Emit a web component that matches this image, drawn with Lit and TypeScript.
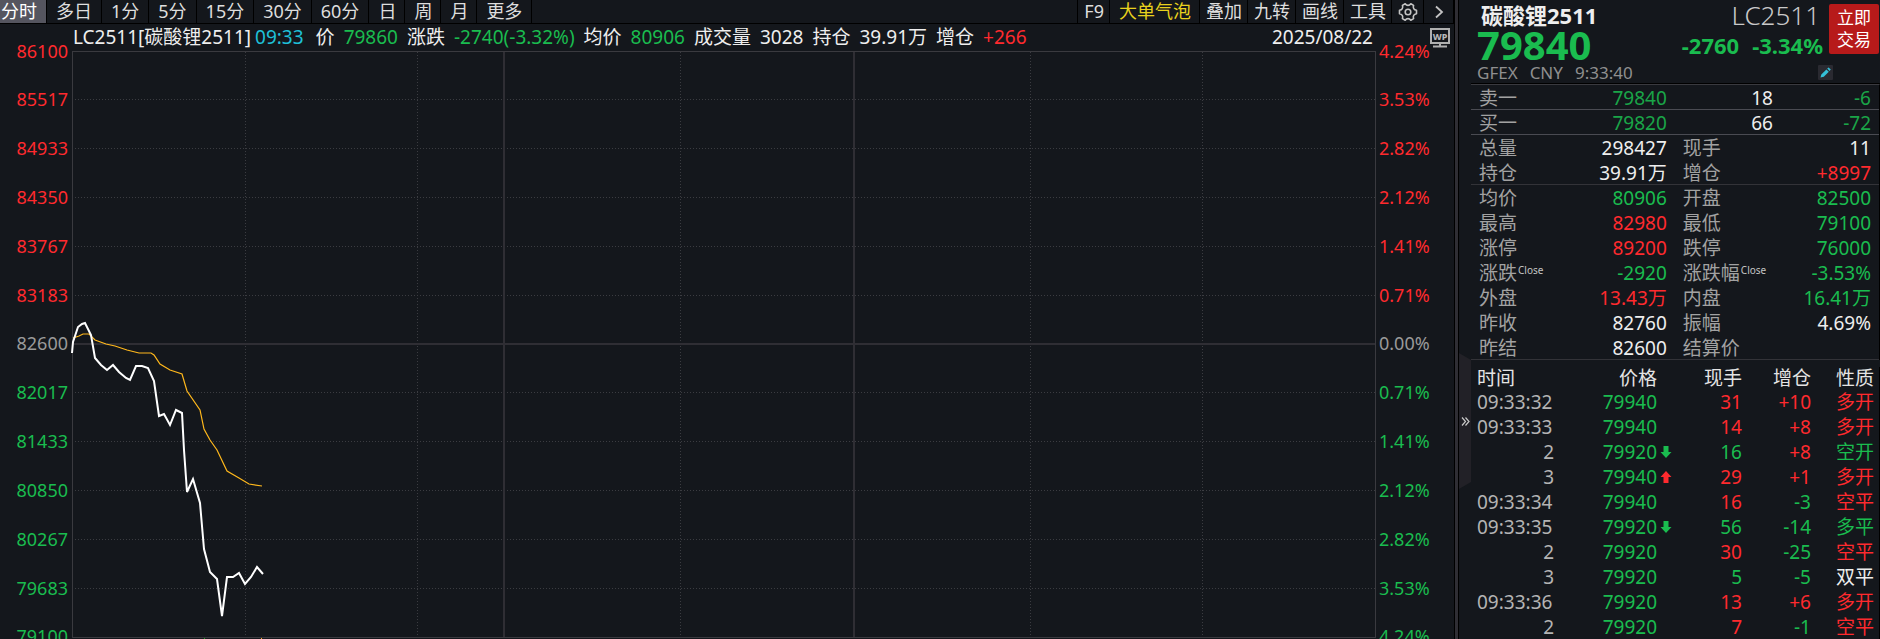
import { LitElement, html, svg, css, nothing } from "lit";
import { customElement, state } from "lit/decorators.js";
import { classMap } from "lit/directives/class-map.js";

type Tone = "up" | "down" | "flat" | "plain";
type Point = [number, number];

const PERIODS = ["分时", "多日", "1分", "5分", "15分", "30分", "60分", "日", "周", "月", "更多"];

const PRICE_AXIS = ["86100", "85517", "84933", "84350", "83767", "83183", "82600", "82017", "81433", "80850", "80267", "79683", "79100"];
const PERCENT_AXIS = ["4.24%", "3.53%", "2.82%", "2.12%", "1.41%", "0.71%", "0.00%", "0.71%", "1.41%", "2.12%", "2.82%", "3.53%", "4.24%"];
const MIDDLE = 6;

const axisTone = (i: number): Tone => (i < MIDDLE ? "up" : i > MIDDLE ? "down" : "flat");

const PLOT_W = 1304;
const PLOT_H = 587;
const SESSION_DOTS = [173, 345, 608, 958, 1130];
const SESSION_BREAKS = [432, 782];

const PRICE_LINE: Point[] = [
  [0, 302], [1, 291], [6, 276], [10, 273], [13, 272], [19, 284], [23, 307], [29, 314], [35, 319], [41, 314],
  [47, 321], [54, 327], [58, 329], [64, 315], [70, 315], [76, 317], [82, 330], [87, 365], [92, 363], [98, 374],
  [104, 359], [110, 362], [112, 399], [115, 441], [121, 428], [128, 452], [132, 498], [138, 521], [145, 528],
  [150, 565], [155, 526], [161, 526], [167, 522], [173, 533], [179, 526], [185, 516], [191, 523],
];
const AVERAGE_LINE: Point[] = [
  [1, 287], [7, 285], [11, 283], [17, 283], [23, 289], [34, 293], [43, 295], [55, 299], [67, 302], [79, 302],
  [82, 304], [88, 313], [98, 319], [110, 323], [115, 340], [128, 359], [132, 378], [138, 389], [145, 399],
  [155, 420], [167, 427], [177, 433], [190, 435],
];
const toPoints = (line: Point[]) => line.map(([x, y]) => `${x},${y}`).join(" ");

const SUMMARY: { label: string; value: string; tone: Tone }[] = [
  { label: "价", value: "79860", tone: "down" },
  { label: "涨跌", value: "-2740(-3.32%)", tone: "down" },
  { label: "均价", value: "80906", tone: "down" },
  { label: "成交量", value: "3028", tone: "plain" },
  { label: "持仓", value: "39.91万", tone: "plain" },
  { label: "增仓", value: "+266", tone: "up" },
];

const BOOK = [
  { side: "卖一", price: "79840", volume: "18", change: "-6" },
  { side: "买一", price: "79820", volume: "66", change: "-72" },
];

interface Stat {
  label: string;
  note?: string;
  value: string;
  tone: Tone;
}
const STATS: [Stat, Stat][] = [
  [{ label: "总量", value: "298427", tone: "plain" }, { label: "现手", value: "11", tone: "plain" }],
  [{ label: "持仓", value: "39.91万", tone: "plain" }, { label: "增仓", value: "+8997", tone: "up" }],
  [{ label: "均价", value: "80906", tone: "down" }, { label: "开盘", value: "82500", tone: "down" }],
  [{ label: "最高", value: "82980", tone: "up" }, { label: "最低", value: "79100", tone: "down" }],
  [{ label: "涨停", value: "89200", tone: "up" }, { label: "跌停", value: "76000", tone: "down" }],
  [{ label: "涨跌", note: "Close", value: "-2920", tone: "down" }, { label: "涨跌幅", note: "Close", value: "-3.53%", tone: "down" }],
  [{ label: "外盘", value: "13.43万", tone: "up" }, { label: "内盘", value: "16.41万", tone: "down" }],
  [{ label: "昨收", value: "82760", tone: "plain" }, { label: "振幅", value: "4.69%", tone: "plain" }],
  [{ label: "昨结", value: "82600", tone: "plain" }, { label: "结算价", value: "", tone: "plain" }],
];
const STAT_BREAKS = [1, 8];

interface Trade {
  time: string;
  price: string;
  move?: "up" | "down";
  volume: string;
  volumeTone: Tone;
  change: string;
  kind: string;
  kindTone: Tone;
}
const TRADES: Trade[] = [
  { time: "09:33:32", price: "79940", volume: "31", volumeTone: "up", change: "+10", kind: "多开", kindTone: "up" },
  { time: "09:33:33", price: "79940", volume: "14", volumeTone: "up", change: "+8", kind: "多开", kindTone: "up" },
  { time: "2", price: "79920", move: "down", volume: "16", volumeTone: "down", change: "+8", kind: "空开", kindTone: "down" },
  { time: "3", price: "79940", move: "up", volume: "29", volumeTone: "up", change: "+1", kind: "多开", kindTone: "up" },
  { time: "09:33:34", price: "79940", volume: "16", volumeTone: "up", change: "-3", kind: "空平", kindTone: "up" },
  { time: "09:33:35", price: "79920", move: "down", volume: "56", volumeTone: "down", change: "-14", kind: "多平", kindTone: "down" },
  { time: "2", price: "79920", volume: "30", volumeTone: "up", change: "-25", kind: "空平", kindTone: "up" },
  { time: "3", price: "79920", volume: "5", volumeTone: "down", change: "-5", kind: "双平", kindTone: "plain" },
  { time: "09:33:36", price: "79920", volume: "13", volumeTone: "up", change: "+6", kind: "多开", kindTone: "up" },
  { time: "2", price: "79920", volume: "7", volumeTone: "up", change: "-1", kind: "空平", kindTone: "up" },
];

const shared = css`
  * {
    box-sizing: border-box;
  }
  button {
    font: inherit;
    color: inherit;
    background: none;
    border: 0;
    padding: 0;
    cursor: pointer;
    white-space: nowrap;
  }
  .up {
    color: #ff2a2e;
  }
  .down {
    color: #1abc4f;
  }
  .flat {
    color: #9a9a9a;
  }
  .plain {
    color: #eeeeee;
  }
`;

@customElement("period-bar")
class PeriodBar extends LitElement {
  @state() private active = "分时";

  static styles = [
    shared,
    css`
      :host {
        display: flex;
        height: 24px;
        border-bottom: 1px solid #000;
        font-size: 18px;
        line-height: 20px;
        color: #dedede;
      }
      nav,
      .tools {
        display: flex;
      }
      .tools {
        margin-left: auto;
        border-left: 1px solid #000;
      }
      button {
        display: flex;
        align-items: center;
        justify-content: center;
        padding: 0 9px 2px;
        border-right: 1px solid #000;
      }
      nav button:first-child {
        padding-left: 1px;
      }
      nav .short {
        padding-right: 8px;
      }
      .active {
        background: #55555f;
        color: #fff;
      }
      .tools button {
        padding: 0 5px 2px 6px;
      }
      .tools .bubble {
        padding: 0 8px 2px 9px;
        color: #e8d21d;
      }
      .tools .icon {
        width: 32px;
        padding: 0;
      }
      .tools .next {
        width: 30px;
      }
      svg {
        display: block;
        fill: none;
        stroke: #c4c4c4;
      }
    `,
  ];

  render() {
    return html`
      <nav>
        ${PERIODS.map(
          (p) => html`<button
            class=${classMap({ active: p === this.active, short: p.length === 1 })}
            @click=${() => (this.active = p)}
          >
            ${p}
          </button>`
        )}
      </nav>
      <div class="tools">
        <button>F9</button>
        <button class="bubble">大单气泡</button>
        <button>叠加</button>
        <button>九转</button>
        <button>画线</button>
        <button>工具</button>
        <button class="icon" aria-label="设置">
          <svg width="20" height="20" viewBox="0 0 20 20" stroke-width="1.6" stroke-linejoin="round">
            <path
              d="M7.2 1.8 Q8.3 3.4 10 3.4 Q11.7 3.4 12.8 1.8 L15.6 3.4 Q14.9 5.2 15.7 6.6 Q16.5 8 18.5 8.3 V11.7 Q16.5 12 15.7 13.4 Q14.9 14.8 15.6 16.6 L12.8 18.2 Q11.7 16.6 10 16.6 Q8.3 16.6 7.2 18.2 L4.4 16.6 Q5.1 14.8 4.3 13.4 Q3.5 12 1.5 11.7 V8.3 Q3.5 8 4.3 6.6 Q5.1 5.2 4.4 3.4 Z"
            />
            <circle cx="10" cy="10" r="2.8" />
          </svg>
        </button>
        <button class="icon next" aria-label="展开">
          <svg width="10" height="14" viewBox="0 0 10 14" stroke-width="1.8"><path d="M2 1.5 L8 7 L2 12.5" /></svg>
        </button>
      </div>
    `;
  }
}

@customElement("intraday-chart")
class IntradayChart extends LitElement {
  static styles = [
    shared,
    css`
      :host {
        display: flex;
        flex-direction: column;
        min-height: 0;
        overflow: hidden;
      }
      .info {
        display: flex;
        align-items: center;
        height: 27px;
        flex: none;
        padding: 0 3px 0 73px;
        font-size: 19px;
        line-height: 27px;
        color: #eee;
        white-space: nowrap;
      }
      .clock {
        color: #1fc0d8;
        margin: 0 12px 0 4px;
      }
      .items {
        display: flex;
        gap: 9px;
      }
      .date {
        margin-left: auto;
        margin-right: 57px;
      }
      .board {
        flex: none;
        margin-right: 1px;
      }
      .body {
        flex: 1;
        min-height: 0;
        display: grid;
        grid-template-columns: 72px minmax(0, 1fr) 78px;
        padding-bottom: 1px;
      }
      .axis {
        display: flex;
        flex-direction: column;
        justify-content: space-between;
        list-style: none;
        margin: -1px 0 1px;
        padding: 0 4px 0 3px;
        font-size: 18px;
      }
      .axis li {
        display: flex;
        align-items: center;
        height: 1px;
        line-height: 20px;
      }
      .price li {
        justify-content: flex-end;
      }
      .plot {
        display: block;
        width: 100%;
        height: 100%;
        overflow: visible;
      }
      .dots {
        stroke: #3b3c41;
        stroke-dasharray: 1 2;
      }
      .solid {
        stroke: #2f2e34;
        stroke-width: 2;
      }
      .frame {
        fill: none;
        stroke: #3a3a3f;
      }
      .last {
        fill: none;
        stroke: #fff;
        stroke-width: 2;
      }
      .average {
        fill: none;
        stroke: #ffb81c;
        stroke-width: 1.2;
      }
    `,
  ];

  render() {
    return html`
      <div class="info">
        <span>LC2511[碳酸锂2511]</span>
        <span class="clock">09:33</span>
        <div class="items">
          ${SUMMARY.map((s) => html`<span>${s.label}</span><span class=${s.tone}>${s.value}</span>`)}
        </div>
        <span class="date">2025/08/22</span>
        <svg class="board" width="20" height="20" viewBox="0 0 20 20">
          <rect x="1" y="1" width="18" height="14" fill="none" stroke="#b0b0b0" stroke-width="2" />
          <path d="M10 15 V18 M3 18.5 H17" fill="none" stroke="#b0b0b0" stroke-width="2" />
          <text x="10" y="11.5" text-anchor="middle" font-size="9" font-weight="800" fill="#b8b8b8">WP</text>
        </svg>
      </div>
      <div class="body">
        <ul class="axis price">
          ${PRICE_AXIS.map((v, i) => html`<li class=${axisTone(i)}>${v}</li>`)}
        </ul>
        <svg class="plot" viewBox="0 0 ${PLOT_W} ${PLOT_H}" preserveAspectRatio="none">
          ${PRICE_AXIS.map((_, i) => {
            const y = Math.floor((i * (PLOT_H - 1)) / 12) + 0.5;
            return i === 0 || i === 12 || i === MIDDLE
              ? nothing
              : svg`<line class="dots" x1="3" x2=${PLOT_W} y1=${y} y2=${y} />`;
          })}
          ${SESSION_DOTS.map((x) => svg`<line class="dots" x1=${x + 0.5} x2=${x + 0.5} y1="1" y2=${PLOT_H} />`)}
          ${SESSION_BREAKS.map((x) => svg`<line class="solid" x1=${x} x2=${x} y1="1" y2=${PLOT_H} />`)}
          <line class="solid" x1="1" x2=${PLOT_W} y1="293" y2="293" />
          <rect class="frame" x="0.5" y="0.5" width=${PLOT_W - 1} height=${PLOT_H - 1} />
          <polyline class="average" points=${toPoints(AVERAGE_LINE)} />
          <polyline class="last" points=${toPoints(PRICE_LINE)} />
          <rect x="132" y=${PLOT_H} width="1" height="1" fill="#1a9a1a" />
          <rect x="189" y=${PLOT_H} width="1" height="1" fill="#f5a020" />
        </svg>
        <ul class="axis">
          ${PERCENT_AXIS.map((v, i) => html`<li class=${axisTone(i)}>${v}</li>`)}
        </ul>
      </div>
    `;
  }
}

@customElement("quote-panel")
class QuotePanel extends LitElement {
  static styles = [
    shared,
    css`
      :host {
        display: block;
        min-width: 0;
        font-size: 19px;
        color: #eee;
        white-space: nowrap;
      }
      .head {
        display: grid;
        grid-template-columns: minmax(0, 1fr) 50px;
        column-gap: 6px;
        padding: 0 1px 0 6px;
        height: 84px;
        line-height: 1;
      }
      .title,
      .quote {
        display: flex;
        justify-content: space-between;
        align-items: center;
        height: 30px;
      }
      .name {
        padding-left: 4px;
        font-size: 22px;
        font-weight: 700;
      }
      .code {
        padding-right: 3px;
        font-size: 26px;
        font-weight: 300;
        color: #c9c9c9;
      }
      .price {
        font-size: 40px;
        font-weight: 700;
      }
      .delta {
        display: flex;
        gap: 13px;
        font-size: 22px;
        font-weight: 700;
      }
      .meta {
        display: flex;
        gap: 12px;
        align-items: center;
        height: 24px;
        font-size: 17px;
        color: #8f8f8f;
      }
      .edit {
        display: block;
        width: 15px;
        height: 15px;
        margin-left: auto;
        margin-right: -10px;
        background: #2a2a31;
        border-radius: 1px;
      }
      .edit svg {
        display: block;
      }
      .trade {
        margin-top: 4px;
        height: 50px;
        border-radius: 2px;
        background: #b71a1a;
        color: #fff;
        font-size: 17px;
        line-height: 22px;
        white-space: normal;
        padding: 0 8px;
      }
      table {
        width: 100%;
        table-layout: fixed;
        border-collapse: separate;
        border-spacing: 0;
        border-right: 1px solid #000;
      }
      th,
      td {
        height: 25px;
        padding: 2px 0 0;
        font-weight: 400;
        line-height: 22px;
        text-align: right;
        border-bottom: 1px solid transparent;
      }
      .label {
        padding-left: 8px;
        text-align: left;
        color: #a2a2a2;
      }
      .second {
        padding-left: 16px;
      }
      .end {
        padding-right: 8px;
      }
      .ruled > * {
        border-bottom-color: #333338;
      }
      .book {
        border-top: 1px solid #3a3a3f;
        box-shadow: 0 -1px #000;
      }
      .book .ruled > * {
        border-bottom-color: #4a4b52;
      }
      .dim {
        color: #1aa548;
      }
      sup {
        margin-left: 1px;
        font-size: 10px;
        line-height: 10px;
        vertical-align: 6px;
        color: #c4c4c4;
      }
      .ticks {
        margin-top: 7px;
      }
      .ticks thead th {
        height: 22px;
        line-height: 19px;
        color: #e4e4e4;
      }
      .ticks .time {
        padding-left: 6px;
        text-align: left;
      }
      .ticks td.time {
        color: #b4b4b4;
      }
      .ticks .seq {
        padding-left: 0;
        text-align: right;
      }
      .ticks .kind {
        padding-right: 5px;
      }
      .ticks svg {
        display: block;
        margin-left: 3px;
        fill: currentColor;
      }
      .c-side {
        width: 16%;
      }
      .c-price {
        width: 32%;
      }
      .c-size {
        width: 26%;
      }
      .c-half {
        width: 24%;
      }
      .c-label {
        width: 27%;
      }
      .c-time,
      .c-last {
        width: 83px;
      }
      .c-last {
        width: 103px;
      }
      .c-arrow {
        width: 16px;
      }
      .c-lots {
        width: 69px;
      }
    `,
  ];

  private stat(s: Stat, second: boolean) {
    return html`
      <th scope="row" class=${classMap({ label: true, second })}>${s.label}${s.note ? html`<sup>${s.note}</sup>` : nothing}</th>
      <td class=${classMap({ [s.tone]: true, end: second })}>${s.value}</td>
    `;
  }

  private arrow(move?: "up" | "down") {
    if (!move) return nothing;
    return html`<svg class=${move} width="12" height="12" viewBox="0 0 12 12">
      <path d=${move === "up" ? "M6 0 L11.5 6 H8.5 V12 H3.5 V6 H0.5 Z" : "M6 12 L11.5 6 H8.5 V0 H3.5 V6 H0.5 Z"} />
    </svg>`;
  }

  render() {
    return html`
      <header class="head">
        <div>
          <div class="title"><span class="name">碳酸锂2511</span><span class="code">LC2511</span></div>
          <div class="quote down">
            <span class="price">79840</span>
            <span class="delta"><span>-2760</span><span>-3.34%</span></span>
          </div>
          <div class="meta">
            <span>GFEX</span><span>CNY</span><span>9:33:40</span>
            <button class="edit" aria-label="编辑">
              <svg width="15" height="15" viewBox="0 0 15 15" fill="#35c0d8">
                <path d="M2.5 12.5 L3.3 9.4 L8.4 4.4 L10.8 6.8 L5.8 11.8 Z M9.2 3.6 L10.6 2.4 L12.8 4.6 L11.5 6 Z" />
              </svg>
            </button>
          </div>
        </div>
        <button class="trade">立即<br />交易</button>
      </header>

      <table class="book">
        <colgroup>
          <col class="c-side" /><col class="c-price" /><col class="c-size" /><col class="c-size" />
        </colgroup>
        <tbody>
          ${BOOK.map(
            (b) => html`<tr class="ruled">
              <th scope="row" class="label">${b.side}</th>
              <td class="dim">${b.price}</td>
              <td>${b.volume}</td>
              <td class="dim end">${b.change}</td>
            </tr>`
          )}
        </tbody>
      </table>

      <table>
        <colgroup>
          <col class="c-half" /><col class="c-half" /><col class="c-label" /><col />
        </colgroup>
        <tbody>
          ${STATS.map(
            ([a, b], i) => html`<tr class=${classMap({ ruled: STAT_BREAKS.includes(i) })}>
              ${this.stat(a, false)}${this.stat(b, true)}
            </tr>`
          )}
        </tbody>
      </table>

      <table class="ticks">
        <colgroup>
          <col class="c-time" /><col class="c-last" /><col class="c-arrow" /><col class="c-lots" /><col class="c-lots" /><col />
        </colgroup>
        <thead>
          <tr>
            <th class="time">时间</th>
            <th>价格</th>
            <th></th>
            <th>现手</th>
            <th>增仓</th>
            <th class="kind">性质</th>
          </tr>
        </thead>
        <tbody>
          ${TRADES.map(
            (t) => html`<tr>
              <td class=${classMap({ time: true, seq: t.time.length < 3 })}>${t.time}</td>
              <td class="down">${t.price}</td>
              <td>${this.arrow(t.move)}</td>
              <td class=${t.volumeTone}>${t.volume}</td>
              <td class=${t.change.startsWith("+") ? "up" : "down"}>${t.change}</td>
              <td class="kind ${t.kindTone}">${t.kind}</td>
            </tr>`
          )}
        </tbody>
      </table>
    `;
  }
}

@customElement("app-root")
class AppRoot extends LitElement {
  static styles = [
    shared,
    css`
      :host {
        display: grid;
        grid-template-columns: minmax(0, 1fr) 5px 12px 409px;
        height: 100vh;
        overflow: hidden;
        background: #14171c;
        font-family: "Noto Sans", "Noto Sans CJK SC", sans-serif;
      }
      .main {
        display: flex;
        flex-direction: column;
        min-width: 0;
        min-height: 0;
      }
      intraday-chart {
        flex: 1;
      }
      .divider {
        background: #2f2e34;
        border: solid #000;
        border-width: 0 1px;
      }
      .rail {
        padding-top: 353px;
      }
      .fold {
        display: flex;
        align-items: center;
        justify-content: center;
        width: 12px;
        height: 136px;
        background: #222127;
        clip-path: polygon(0 0, 100% 7px, 100% 129px, 0 100%);
      }
    `,
  ];

  render() {
    return html`
      <main class="main">
        <period-bar></period-bar>
        <intraday-chart></intraday-chart>
      </main>
      <div class="divider"></div>
      <div class="rail">
        <button class="fold" aria-label="收起">
          <svg width="9" height="9" viewBox="0 0 9 9" fill="none" stroke="#c8c8c8" stroke-width="1.2">
            <path d="M1 0.5 L4.5 4.5 L1 8.5 M4.5 0.5 L8 4.5 L4.5 8.5" />
          </svg>
        </button>
      </div>
      <quote-panel></quote-panel>
    `;
  }
}
